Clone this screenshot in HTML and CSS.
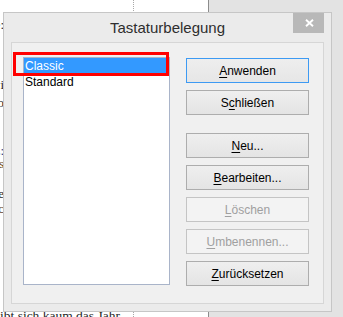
FILE: index.html
```html
<!DOCTYPE html>
<html lang="de">
<head>
<meta charset="utf-8">
<title>Tastaturbelegung</title>
<link rel="stylesheet" href="styles.css">
</head>
<body>
<div class="screen">
  <div class="page">
    <div class="textcol">
      <div class="frag f1"><span>Symbolleiste:</span></div>
      <div class="frag f2"><span>Sonderzeichen wi</span></div>
      <div class="frag f3"><span>ebenso</span></div>
      <div class="frag f4"><span>Absatz:</span></div>
      <div class="frag f5"><span>Formats</span></div>
      <div class="frag f6"><span>Tabelle</span></div>
      <div class="frag f7"><span>Stic</span></div>
      <div class="lastline">ibt sich kaum das Jahr</div>
    </div>
  </div>
  <div class="desk"></div>

  <div class="dialog">
    <div class="titlebar">
      <div class="title">Tastaturbelegung</div>
      <div class="close">
        <svg width="9" height="8" viewBox="0 0 9 8"><path d="M1 0.8 L8 7.2 M8 0.8 L1 7.2" stroke="#fff" stroke-width="1.9" fill="none"/></svg>
      </div>
    </div>
    <div class="client">
      <div class="listbox">
        <div class="item selected">Classic</div>
        <div class="item">Standard</div>
      </div>
      <div class="buttons">
        <div class="btn default"><u>A</u>nwenden</div>
        <div class="btn">S<u>c</u>hließen</div>
        <div class="btn spaced"><u>N</u>eu...</div>
        <div class="btn"><u>B</u>earbeiten...</div>
        <div class="btn disabled"><u>L</u>öschen</div>
        <div class="btn disabled"><u>U</u>mbenennen...</div>
        <div class="btn"><u>Z</u>urücksetzen</div>
      </div>
      <div class="redmark"></div>
    </div>
  </div>
</div>
</body>
</html>
```

FILE: styles.css
```css
html, body {
  margin: 0;
  padding: 0;
}
body {
  width: 343px;
  height: 317px;
  overflow: hidden;
  background: #e3e3e3;
}
.screen {
  position: relative;
  display: flex;
  width: 343px;
  height: 317px;
  overflow: hidden;
}
.page {
  width: 208px;
  height: 317px;
  background: #ffffff;
  border-right: 1px solid #8c8c8c;
  flex: none;
}
.textcol {
  width: 133px;
  height: 317px;
  border-right: 1px dotted #a8a8a8;
  display: flex;
  flex-direction: column;
  font-family: "Liberation Serif", serif;
  font-size: 13px;
  color: #1e1e1e;
}
.frag {
  width: 4px;
  height: 12px;
  line-height: 12px;
  display: flex;
  justify-content: flex-end;
  white-space: nowrap;
}
.f1 { margin-top: 19px; }
.f2 { margin-top: 48px; }
.f3 { margin-top: 6px; }
.f4 { margin-top: 36px; color: #2a3a7a; }
.f5 { margin-top: 1px; color: #6a4a20; }
.f6 { margin-top: 18px; }
.f7 { margin-top: 3px; color: #5a3a2a; }
.lastline {
  margin-top: 95px;
  height: 12px;
  line-height: 12px;
  font-size: 13.5px;
  white-space: nowrap;
}
.desk {
  flex: 1;
  background: #e3e3e3;
}

/* dialog window */
.dialog {
  position: absolute;
  left: 3px;
  top: 12px;
  width: 329px;
  height: 300px;
  box-sizing: border-box;
  border: 1px solid #c6c6c6;
  background: #ebebeb;
  padding: 0 7px 7px 7px;
  display: flex;
  flex-direction: column;
  font-family: "Liberation Sans", Arial, sans-serif;
}
.titlebar {
  height: 29px;
  flex: none;
  display: grid;
  grid-template-columns: 1fr auto 1fr;
}
.title {
  grid-column: 2;
  font-size: 15px;
  line-height: 29px;
  color: #2e2e2e;
  white-space: nowrap;
}
.close {
  grid-column: 3;
  justify-self: end;
  width: 31px;
  height: 20px;
  background: #b8b8b8;
  display: flex;
  align-items: center;
  justify-content: center;
}
.close svg {
  margin-left: 1px;
}
.client {
  position: relative;
  flex: 1;
  border: 1px solid #d6d6d6;
  background: #f0f0f0;
  padding: 14px 14px 0 11px;
  display: flex;
  gap: 16px;
  align-items: flex-start;
}
.listbox {
  width: 147px;
  height: 228px;
  box-sizing: border-box;
  border: 1px solid #a9b4c9;
  background: #ffffff;
  flex: none;
}
.item {
  height: 16px;
  line-height: 16px;
  font-size: 12px;
  padding-left: 1px;
  color: #000;
  white-space: nowrap;
}
.item.selected {
  background: #3399ff;
  color: #ffffff;
}
.buttons {
  width: 123px;
  margin-top: 1px;
  display: flex;
  flex-direction: column;
  gap: 7px;
  flex: none;
}
.btn {
  height: 25px;
  box-sizing: border-box;
  border: 1px solid #adadad;
  background: linear-gradient(#efefef, #e4e4e4);
  padding-top: 2px;
  line-height: 21px;
  font-size: 12px;
  color: #000;
  text-align: center;
  white-space: nowrap;
}
.btn u {
  text-decoration: underline;
  text-underline-offset: 2px;
}
.btn.default {
  border-color: #3d9af3;
  background: linear-gradient(#eeeeee, #e6e6e6);
}
.btn.spaced {
  margin-top: 11px;
}
.btn.disabled {
  border-color: #c4c4c4;
  background: #f3f3f3;
  color: #a0a0a0;
}
.redmark {
  position: absolute;
  left: 1px;
  top: 9px;
  width: 156px;
  height: 24px;
  box-sizing: border-box;
  border: 3px solid #ff0000;
}
```
